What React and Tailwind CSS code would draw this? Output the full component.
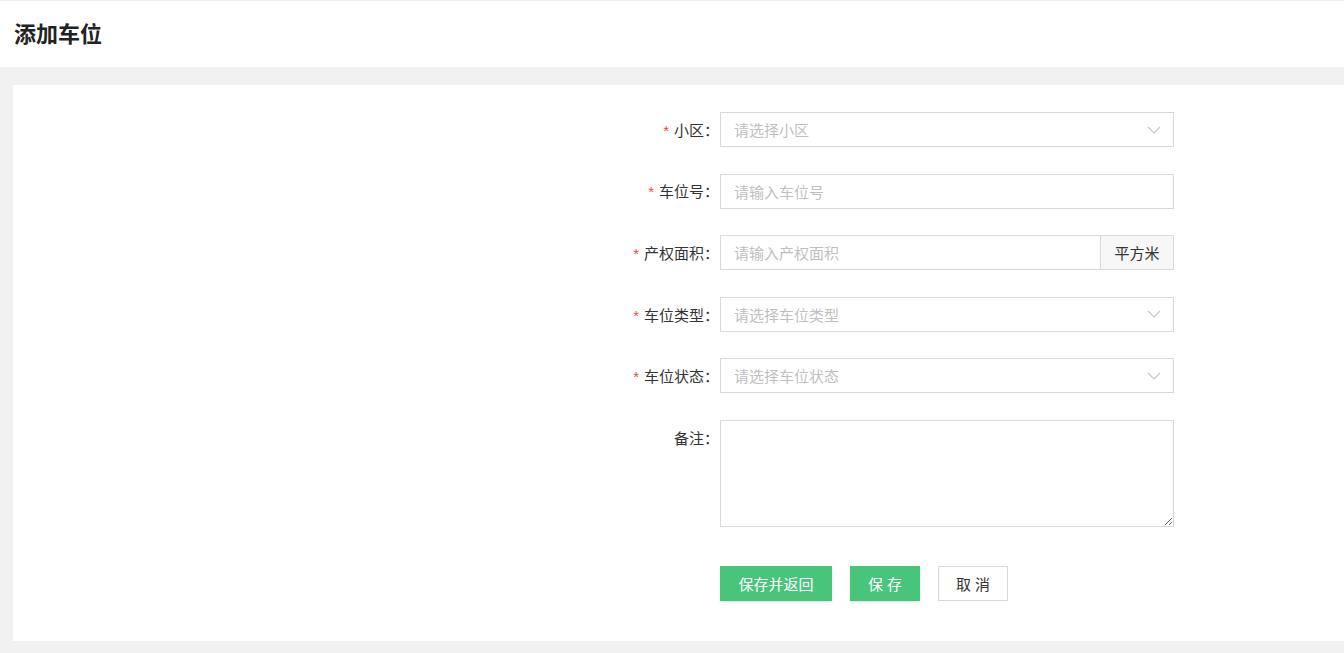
import React from "react";

const font = { fontFamily: '"Liberation Sans", "Noto Sans CJK SC", sans-serif' };

const Chevron = () => (
  <svg width="14" height="8" viewBox="0 0 14 8" className="absolute right-[12px] top-1/2 -translate-y-1/2">
    <polyline points="1,1 7,7 13,1" fill="none" stroke="#c8c8c8" strokeWidth="1.2" />
  </svg>
);

const Label = ({ required, children }) => (
  <div className="w-[707px] shrink-0 h-[35px] flex items-center justify-end pr-[1px] pt-[3px] text-[15px] text-[#333]">
    {required && <span className="text-[#f04848] mr-[5px] text-[15px]">*</span>}
    {children}：
  </div>
);

const SelectBox = ({ placeholder }) => (
  <div className="relative w-[454px] h-[35px] border border-[#d9d9d9] flex items-center pl-[13px] pt-[3px] text-[15px] text-[#bfbfbf] bg-white">
    {placeholder}
    <Chevron />
  </div>
);

const InputBox = ({ placeholder }) => (
  <input
    className="w-[454px] h-[35px] border border-[#d9d9d9] pl-[13px] pt-[3px] text-[15px] outline-none placeholder:text-[#bfbfbf]"
    placeholder={placeholder}
  />
);

const App = () => {
  return (
    <div className="w-full min-h-[653px] bg-[#f1f1f1] flex flex-col" style={font}>
      <div className="h-[1px] bg-[#eeeeee]" />
      <header className="h-[66px] bg-white flex items-center pl-[14px]">
        <h1 className="text-[22px] font-bold text-[#222]">添加车位</h1>
      </header>
      <main className="mt-[18px] ml-[13px] mb-[12px] bg-white pt-[27px] pb-[40px] flex flex-col">
        <div className="flex flex-col gap-[26.6px]">
          <div className="flex">
            <Label required>小区</Label>
            <SelectBox placeholder="请选择小区" />
          </div>
          <div className="flex">
            <Label required>车位号</Label>
            <InputBox placeholder="请输入车位号" />
          </div>
          <div className="flex">
            <Label required>产权面积</Label>
            <div className="flex w-[454px] h-[35px] border border-[#d9d9d9]">
              <input
                className="flex-1 min-w-0 pl-[13px] pt-[3px] text-[15px] outline-none placeholder:text-[#bfbfbf]"
                placeholder="请输入产权面积"
              />
              <div className="w-[73px] border-l border-[#d9d9d9] bg-[#f7f7f7] flex items-center justify-center pt-[3px] text-[15px] text-[#333]">
                平方米
              </div>
            </div>
          </div>
          <div className="flex">
            <Label required>车位类型</Label>
            <SelectBox placeholder="请选择车位类型" />
          </div>
          <div className="flex">
            <Label required>车位状态</Label>
            <SelectBox placeholder="请选择车位状态" />
          </div>
          <div className="flex">
            <Label>备注</Label>
            <textarea className="w-[454px] h-[107px] border border-[#d9d9d9] outline-none text-[15px] p-2" />
          </div>
        </div>
        <div className="flex ml-[707px] mt-[39px] gap-[18px]">
          <button className="w-[112px] h-[35px] bg-[#48c47b] text-white text-[15px] pt-[3px] shadow-sm">保存并返回</button>
          <button className="w-[70px] h-[35px] bg-[#48c47b] text-white text-[15px] pt-[3px] shadow-sm">保 存</button>
          <button className="w-[70px] h-[35px] bg-white border border-[#d9d9d9] text-[#333] text-[15px] pt-[3px]">取 消</button>
        </div>
      </main>
    </div>
  );
};

export default App;
